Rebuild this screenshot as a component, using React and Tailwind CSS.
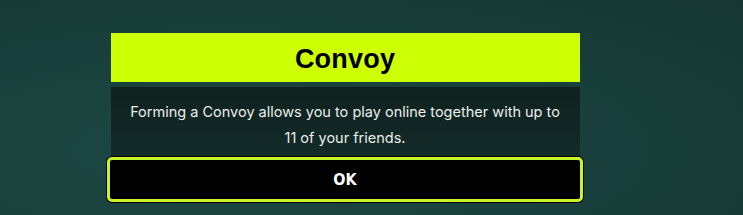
export default function App() {
  return (
    <div className="h-[215px] w-[743px] overflow-hidden bg-[radial-gradient(ellipse_at_30%_70%,#1d4843_0%,#183f3b_55%,#163632_100%)] pt-[33px] pl-[107px]">
      <div className="flex w-[476px] flex-col items-center">
        {/* Header */}
        <div className="flex h-[49px] w-[469px] items-center justify-center bg-[#cdff05]">
          <h1 className="pt-[3px] font-['Liberation_Sans',sans-serif] text-[27px] font-bold tracking-[0.2px] text-black">Convoy</h1>
        </div>

        {/* Body */}
        <div className="mt-[5px] flex h-[70px] w-[469px] flex-col items-center bg-[linear-gradient(180deg,#0f211f_0%,#132b28_100%)] pt-[12px]">
          <p className="text-center font-['Inter',sans-serif] text-[14.5px] leading-[26px] text-[#e9eeeb]">
            Forming a Convoy allows you to play online together with up to
            <br />
            11 of your friends.
          </p>
        </div>

        {/* OK button */}
        <button className="flex h-[45px] w-[476px] items-center justify-center rounded-[5px] border-[3px] border-[#c6f32a] bg-black shadow-[0_0_0_1px_#000]">
          <span className="font-['DejaVu_Sans_Condensed',sans-serif] text-[16px] font-bold text-white">OK</span>
        </button>
      </div>
    </div>
  );
}
